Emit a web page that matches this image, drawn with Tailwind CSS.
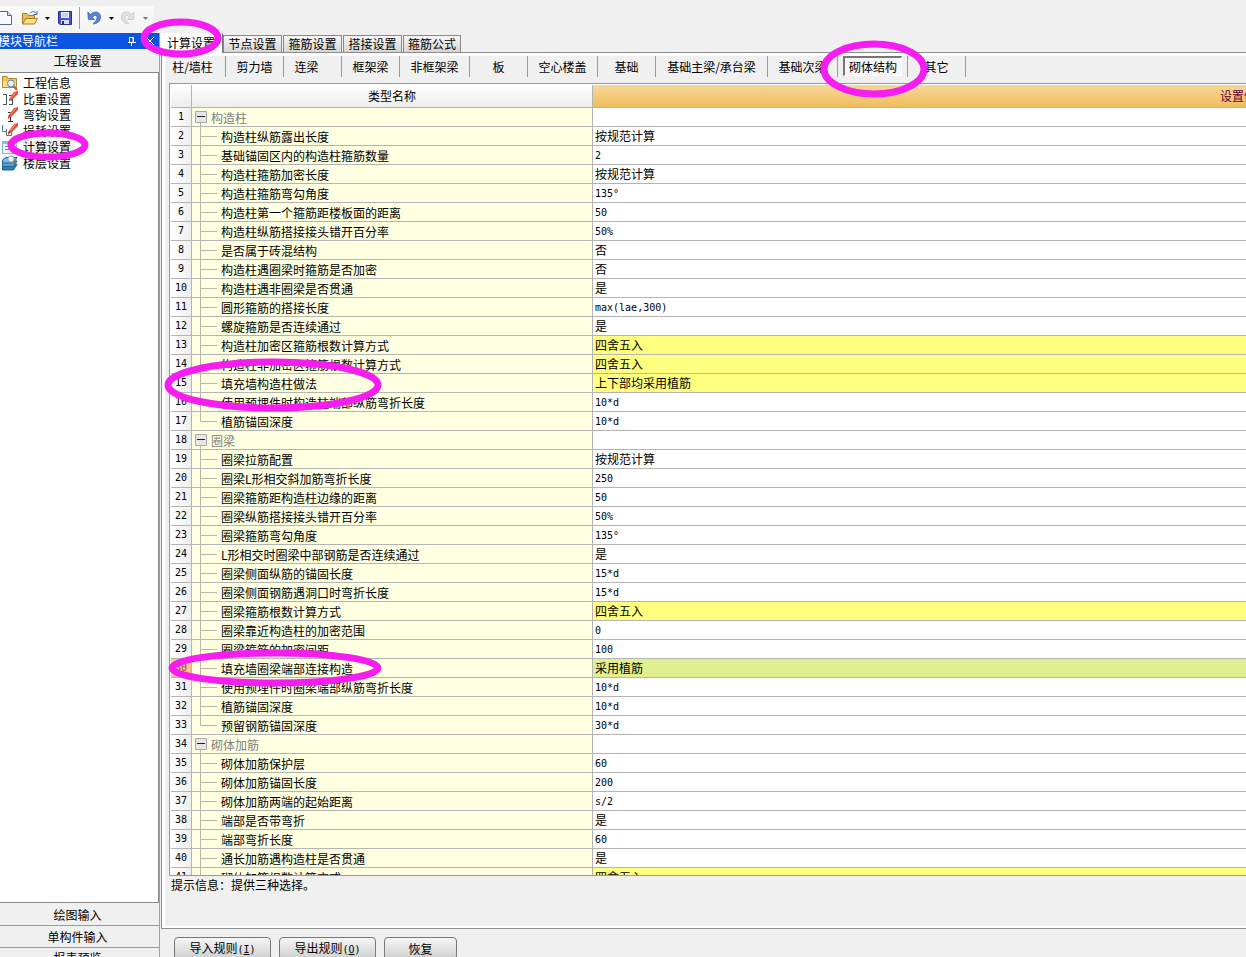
<!DOCTYPE html>
<html lang="zh-CN">
<head>
<meta charset="utf-8">
<title>工程设置</title>
<script src="https://cdn.jsdelivr.net/npm/@tailwindcss/browser@4"></script>
</head>
<body class="relative flex h-screen flex-col overflow-hidden bg-[#f0f0f0] font-['Noto_Sans_CJK_SC',sans-serif] text-xs leading-4 text-black">

<header class="flex h-[33px] shrink-0 items-end">
  <div class="flex h-[27px] w-[154px] items-center bg-gradient-to-b from-[#fafafa] to-[#f3f3f3] pb-[3px]">
    <button aria-label="新建" class="w-[22px]"><svg width="16" height="16" viewBox="0 0 16 16"><path d="M-3 1.500H7.500L11.500 5.500V14.500H-3Z" fill="#f6faff" stroke="#536a86"/><path d="M7.500 1.500V5.500H11.500" fill="#cfdcf0" stroke="#536a86"/></svg></button>
    <button aria-label="打开" class="w-[18px]"><svg width="17" height="16" viewBox="0 0 17 16"><path d="M.5 13.500V3.500H5L6.500 5.500H12.500V8" fill="#e9bd50" stroke="#a87c28"/><path d="M.5 14L4 8.500H15.500L12.500 14Z" fill="#fbdf86" stroke="#a87c28"/><path d="M8 3.500C10 .8 13 1 14 3.500M15 1V4.500H11.500" fill="none" stroke="#46648f"/></svg></button>
    <button aria-label="打开选项" class="w-[17px]"><svg width="14" height="16"><path d="M5 7H10L7.500 10Z"/></svg></button>
    <button aria-label="保存" class="w-[22px]"><svg width="16" height="16" viewBox="0 0 16 16"><path d="M1.500 1.500H14.500V14.500H3L1.500 13Z" fill="#4c55c4" stroke="#292f8c"/><path d="M4 2H12V8H4Z" fill="#eef4ff"/><path d="M5 4H11M5 6H11" stroke="#9fb0dd"/><path d="M4 10H12V14H4Z" fill="#d7dcf0"/><path d="M5 11H7V14H5Z" fill="#2b3080"/></svg></button>
    <span class="h-[22px] w-2 border-l border-[#a0a0a0]"></span>
    <button aria-label="撤销" class="w-[17px]"><svg width="15" height="16" viewBox="0 0 15 16"><path d="M.8 2L1.300 9.500H7.500L5.500 7.200C7.500 4.500 10.200 5 10 8C9.800 10.500 8 11.500 6 14C11 13.500 13.500 11 13.500 6.500C13.300 1.500 7 .2 3.500 4.500Z" fill="#5583d4" stroke="#2f5cab" stroke-width=".7"/></svg></button>
    <button aria-label="撤销选项" class="w-[17px]"><svg width="14" height="16"><path d="M5 7H10L7.500 10Z"/></svg></button>
    <button aria-label="重做" class="w-[18px]"><svg width="15" height="16" viewBox="0 0 15 16"><path d="M13.200 2L12.700 9.500H6.500L8.500 7.200C6.500 4.500 3.800 5 4 8C4.200 10.500 6 11.500 8 14C3 13.500 .5 11 .5 6.500C.7 1.500 7 .2 10.500 4.500Z" fill="#e2e2e2" stroke="#c2c2c2" stroke-width=".7"/></svg></button>
    <button aria-label="重做选项" class="w-[14px]"><svg width="14" height="16"><path d="M4 7H9L6.500 10Z" fill="#777"/></svg></button>
  </div>
</header>

<div class="flex min-h-0 flex-1">
  <aside class="flex w-40 shrink-0 flex-col overflow-hidden border-r border-[#a0a0a0]">
    <div class="flex h-4 shrink-0 items-center bg-[#0a54e0] text-white">
      <h2 class="-ml-[2px] flex-1">模块导航栏</h2>
      <button aria-label="固定" class="w-[18px]"><svg width="10" height="12" viewBox="0 0 10 12"><path d="M2.500 7V2.500H6.500V7M6 2V7M1 7.500H9M4.500 8V11" fill="none" stroke="#fff"/></svg></button>
      <button aria-label="关闭" class="w-[14px]"><svg width="10" height="10" viewBox="0 0 10 10"><path d="M1 1L9 9M9 1L1 9" stroke="#fff"/></svg></button>
    </div>
    <button class="h-6 shrink-0 border-b border-[#888] pr-1">工程设置</button>
    <nav class="min-h-0 flex-1 border-r border-b border-[#888] bg-white pt-[2px]">
      <a href="#" class="flex h-4 items-center gap-[5px] pl-[2px]"><svg width="16" height="16" viewBox="0 0 16 16"><path d="M.5 1.500H5L6 3.500H14.500V12.500H.5Z" fill="#f0c64c" stroke="#b08c34"/><path d="M1 6H14V12H1Z" fill="#fbe08a"/><circle cx="9" cy="8.500" r="3.500" fill="#e4f2ff" stroke="#66809b"/><path d="M11.500 11L15 15" stroke="#b06a25" stroke-width="2"/></svg>工程信息</a>
      <a href="#" class="flex h-4 items-center gap-[5px] pl-[2px]"><svg width="16" height="16" viewBox="0 0 16 16"><path d="M1 3.500H4.500V13.500H1M7 4.500H10.500V13.500H7M7 9H11" fill="none" stroke="#36536f"/><path d="M7 8L12 1L16 0V3L10 9L7 10Z" fill="#e34c38"/><path d="M8.500 7.500L13.500 1.500" stroke="#f6a696"/></svg>比重设置</a>
      <a href="#" class="flex h-4 items-center gap-[5px] pl-[2px]"><svg width="16" height="16" viewBox="0 0 16 16"><path d="M6 5.500H8.500V14M6 14.500H11" fill="none" stroke="#333"/><path d="M6 9L12 1L16 0V3L10 9L6 12Z" fill="#e34c38"/><path d="M8.500 7.500L13.500 1.500" stroke="#f6a696"/></svg>弯钩设置</a>
      <a href="#" class="flex h-4 items-center gap-[5px] pl-[2px]"><svg width="16" height="16" viewBox="0 0 16 16"><path d="M.5 2V8.500H4.500M4.500 6V12.500H9.500V7" fill="none" stroke="#477ba2"/><path d="M6 9L12 1L16 0V3L10 9L6 12Z" fill="#e34c38"/><path d="M8.500 7.500L13.500 1.500" stroke="#f6a696"/></svg>损耗设置</a>
      <a href="#" aria-current="page" class="flex h-4 items-center gap-[5px] pl-[2px]"><svg width="16" height="16" viewBox="0 0 16 16"><path d="M.5 2.500H14.500V14.500H.5Z" fill="#eaf4ff" stroke="#8eb1d7"/><path d="M1 4H14" stroke="#8fbdec" stroke-width="2"/><path d="M3 7.500H7M3 10.500H7M9 7.500H12M9 10.500H12" stroke="#4e89ca"/></svg><span class="bg-[#f0f0f0] pr-1">计算设置</span></a>
      <a href="#" class="flex h-4 items-center gap-[5px] pl-[2px]"><svg width="16" height="16" viewBox="0 0 16 16"><path d="M.5 12L4 9.500H15L11.500 15H.5Z" fill="#2f7eb4" stroke="#1e5f8c"/><path d="M.5 8.500L4 6H15L11.500 11.500H.5Z" fill="#5aa2cf" stroke="#1e5f8c"/><path d="M.5 5L4 2.500H15L11.500 8H.5Z" fill="#7cbce2" stroke="#1e5f8c"/><circle cx="9" cy="4" r="3.200" fill="#e4f2fb" stroke="#7b97ab"/><path d="M11.500 6.500L14.500 9.500" stroke="#b06a25" stroke-width="1.500"/></svg>楼层设置</a>
    </nav>
    <button class="h-[23px] shrink-0 border-b border-[#999] pt-[2px] pr-1">绘图输入</button>
    <button class="h-[22px] shrink-0 border-b border-[#999] pr-1">单构件输入</button>
    <div class="h-[9px] shrink-0 overflow-hidden"><button class="block w-full pt-[2px] pr-1">报表预览</button></div>
  </aside>

  <main class="flex min-w-0 flex-1 flex-col pl-px">
    <div role="tablist" class="flex h-5 shrink-0 items-end border-b border-[#8c8c8c]">
      <button role="tab" aria-selected="true" class="-mb-px h-5 w-[62px] border-r border-[#777] bg-white pr-px">计算设置</button>
      <button role="tab" class="mr-px h-[17px] w-[59px] border border-b-0 border-[#888] bg-gradient-to-b from-[#f6f6f6] to-[#d6d6d6]">节点设置</button>
      <button role="tab" class="mr-px h-[17px] w-[59px] border border-b-0 border-[#888] bg-gradient-to-b from-[#f6f6f6] to-[#d6d6d6]">箍筋设置</button>
      <button role="tab" class="mr-px h-[17px] w-[59px] border border-b-0 border-[#888] bg-gradient-to-b from-[#f6f6f6] to-[#d6d6d6]">搭接设置</button>
      <button role="tab" class="mr-px h-[17px] w-[58px] border border-b-0 border-[#888] bg-gradient-to-b from-[#f6f6f6] to-[#d6d6d6]">箍筋公式</button>
    </div>

    <section class="flex min-h-0 flex-1 flex-col border-b border-l border-[#8c8c8c]">
      <div class="flex min-h-0 flex-1 flex-col border-t-3 border-b-2 border-l-3 border-white pl-px">
        <div class="flex h-[27px] shrink-0 items-start">
          <button class="h-[21px] w-[60px] shrink-0 border-r border-[#999] pr-[6px]">柱/墙柱</button>
          <button class="h-[21px] w-[58px] shrink-0 border-r border-[#999]">剪力墙</button>
          <button class="h-[21px] w-[58px] shrink-0 border-r border-[#999] pr-3">连梁</button>
          <button class="h-[21px] w-[58px] shrink-0 border-r border-[#999]">框架梁</button>
          <button class="h-[21px] w-[70px] shrink-0 border-r border-[#999]">非框架梁</button>
          <button class="h-[21px] w-[58px] shrink-0 border-r border-[#999]">板</button>
          <button class="h-[21px] w-[70px] shrink-0 border-r border-[#999]">空心楼盖</button>
          <button class="h-[21px] w-[58px] shrink-0 border-r border-[#999]">基础</button>
          <button class="h-[21px] w-[112px] shrink-0 border-r border-[#999]">基础主梁/承台梁</button>
          <button class="h-[21px] w-[70px] shrink-0 border-r border-[#999]">基础次梁</button>
          <div class="h-[21px] w-[70px] shrink-0 border-r border-[#999] px-[5px]"><button aria-pressed="true" class="h-5 w-full border-t-2 border-r border-b border-l-2 border-t-[#777] border-r-white border-b-white border-l-[#777] bg-[#f6f6f6]">砌体结构</button></div>
          <button class="h-[21px] w-[58px] shrink-0 border-r border-[#999]">其它</button>
        </div>

        <div class="ml-[3px] min-h-0 flex-1 overflow-hidden border-t border-b border-l border-[#999] bg-white pt-px pl-px">
          <table class="w-[1712px] table-fixed border-separate border-spacing-0">
            <colgroup><col class="w-[21px]"><col class="w-[401px]"><col></colgroup>
            <thead>
              <tr class="h-[23px]">
                <th class="border-r border-b border-[#b4b4b4] bg-gradient-to-b from-white to-[#ececec] p-0"></th>
                <th class="border-r border-b border-[#b4b4b4] bg-gradient-to-b from-white to-[#ececec] p-0 font-normal">类型名称</th>
                <th class="border-b border-[#b4b4b4] bg-gradient-to-b from-[#f8d798] to-[#efbd5c] p-0 font-normal text-[#600030]">设置值</th>
              </tr>
            </thead>
            <tbody id="rules"></tbody>
          </table>
        </div>
        <p class="h-[50px] shrink-0 pt-px pl-[5px]">提示信息：提供三种选择。</p>
      </div>
    </section>

    <footer class="flex h-7 shrink-0 items-start gap-2 overflow-hidden pt-2 pl-[13px]">
      <button class="h-[23px] w-[97px] shrink-0 rounded-sm border border-[#777] bg-gradient-to-b from-[#f6f6f6] to-[#cecece]">导入规则<span class="font-['DejaVu_Sans_Mono',monospace] text-[10px]">(<u>I</u>)</span></button>
      <button class="h-[23px] w-[97px] shrink-0 rounded-sm border border-[#777] bg-gradient-to-b from-[#f6f6f6] to-[#cecece]">导出规则<span class="font-['DejaVu_Sans_Mono',monospace] text-[10px]">(<u>O</u>)</span></button>
      <button class="h-[23px] w-[73px] shrink-0 rounded-sm border border-[#777] bg-gradient-to-b from-[#f6f6f6] to-[#cecece]">恢复</button>
    </footer>
  </main>
</div>

<svg class="pointer-events-none absolute top-0 left-0" width="940" height="700" fill="none" stroke="#f51df0" stroke-width="7" aria-hidden="true">
  <ellipse cx="181" cy="38" rx="37" ry="16"/>
  <ellipse cx="48" cy="145" rx="37" ry="12"/>
  <ellipse cx="874" cy="69" rx="50" ry="25"/>
  <ellipse cx="273" cy="385" rx="105" ry="23"/>
  <ellipse cx="275" cy="668" rx="103" ry="15"/>
</svg>

<script>
// One entry per group: title, then its [name, value] rules.
const groups = [
  ['构造柱', [['构造柱纵筋露出长度','按规范计算'],['基础锚固区内的构造柱箍筋数量','2'],['构造柱箍筋加密长度','按规范计算'],['构造柱箍筋弯勾角度','135°'],['构造柱第一个箍筋距楼板面的距离','50'],['构造柱纵筋搭接接头错开百分率','50%'],['是否属于砖混结构','否'],['构造柱遇圈梁时箍筋是否加密','否'],['构造柱遇非圈梁是否贯通','是'],['圆形箍筋的搭接长度','max(lae,300)'],['螺旋箍筋是否连续通过','是'],['构造柱加密区箍筋根数计算方式','四舍五入'],['构造柱非加密区箍筋根数计算方式','四舍五入'],['填充墙构造柱做法','上下部均采用植筋'],['使用预埋件时构造柱端部纵筋弯折长度','10*d'],['植筋锚固深度','10*d']]],
  ['圈梁', [['圈梁拉筋配置','按规范计算'],['圈梁L形相交斜加筋弯折长度','250'],['圈梁箍筋距构造柱边缘的距离','50'],['圈梁纵筋搭接接头错开百分率','50%'],['圈梁箍筋弯勾角度','135°'],['L形相交时圈梁中部钢筋是否连续通过','是'],['圈梁侧面纵筋的锚固长度','15*d'],['圈梁侧面钢筋遇洞口时弯折长度','15*d'],['圈梁箍筋根数计算方式','四舍五入'],['圈梁靠近构造柱的加密范围','0'],['圈梁箍筋的加密间距','100'],['填充墙圈梁端部连接构造','采用植筋'],['使用预埋件时圈梁端部纵筋弯折长度','10*d'],['植筋锚固深度','10*d'],['预留钢筋锚固深度','30*d']]],
  ['砌体加筋', [['砌体加筋保护层','60'],['砌体加筋锚固长度','200'],['砌体加筋两端的起始距离','s/2'],['端部是否带弯折','是'],['端部弯折长度','60'],['通长加筋遇构造柱是否贯通','是'],['砌体加筋根数计算方式','四舍五入']]]
];
const changed = [13, 14, 15, 27, 41];
const selected = 30;
let n = 0, html = '';
function row(name, value) {
  const num = n === selected ? 'bg-[#f9c58a] text-[#a04030]' : 'bg-gradient-to-r from-white to-[#eeeeee]';
  const val = n === selected ? 'bg-[#e0f090]' : changed.includes(n) ? 'bg-[#ffff80]' : 'bg-white';
  const face = /[^\x00-\xff]/.test(value) ? 'leading-[18px]' : "font-['DejaVu_Sans_Mono',monospace] text-[10px] leading-5";
  html += `<tr class="h-[19px]"><th class="border-r border-b border-[#b4b4b4] p-0 font-['DejaVu_Sans_Mono',monospace] text-[10px] font-normal ${num}">${n}</th>` +
    `<td class="border-r border-b border-[#b4b4b4] bg-[#ffffe1] p-0"><div class="flex h-[18px] items-center">${name}</div></td>` +
    `<td class="border-b border-[#b4b4b4] p-0 pl-[2px] ${val}"><div class="h-[18px] ${face}">${value}</div></td></tr>`;
}
for (const [title, rules] of groups) {
  n++;
  row(`<button aria-label="折叠" class="ml-[3px]"><svg class="overflow-visible" width="12" height="12"><path d="M5.500 12V16" stroke="#b8b8a8"/><path d="M.5 .5H11.500V11.500H.5Z" fill="#e6e6e6" stroke="#a8a8a8"/><path d="M2 5.500H10" stroke="#222"/></svg></button><span class="ml-1 pt-px text-[#808080]">${title}</span>`, '');
  rules.forEach(([name, value], i) => {
    n++;
    const last = n === 17 || n === 33;
    row(`<svg class="ml-2 overflow-visible" width="17" height="18"><path d="${last ? 'M.5 -1V9.500H17' : 'M.5 -1V18M1 9.500H17'}" fill="none" stroke="#b8b8a8"/></svg><span class="ml-1 pt-px">${name}</span>`, value);
  });
}
document.getElementById('rules').innerHTML = html;
</script>
</body>
</html>
